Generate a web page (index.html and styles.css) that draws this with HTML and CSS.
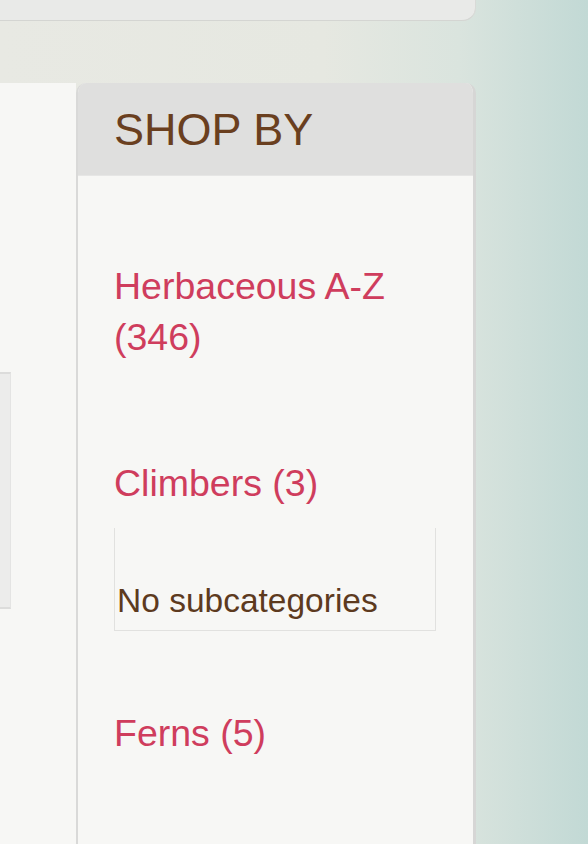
FILE: index.html
```html
<!DOCTYPE html>
<html lang="en">
<head>
    <meta charset="UTF-8">
    <meta name="viewport" content="width=device-width, initial-scale=1.0">
    <title>Shop By</title>
    <link rel="stylesheet" href="styles.css">
</head>
<body>

    <div class="top-bar"></div>

    <div class="page">
        <div class="main-col">
            <div class="main-box"></div>
        </div>

        <aside class="sidebar">
            <h2 class="sidebar-title">SHOP BY</h2>
            <ul class="cat-list">
                <li><a href="#">Herbaceous A-Z (346)</a></li>
                <li class="with-sub">
                    <a href="#">Climbers (3)</a>
                    <div class="subcats">No subcategories</div>
                </li>
                <li><a href="#">Ferns (5)</a></li>
            </ul>
        </aside>
    </div>

</body>
</html>
```

FILE: styles.css
```css
html, body {
    height: 100%;
}
body {
    font-family: "Liberation Sans", Arial, sans-serif;
    margin: 0;
    padding: 0;
    overflow: hidden;
    background: linear-gradient(to right, #e8e9e3 0%, #e6e8e1 55%, #dae4de 78%, #c2d9d5 100%);
}
.top-bar {
    width: 475px;
    height: 20px;
    background-color: #e9eae8;
    border-bottom: 1px solid #d4d5d2;
    border-bottom-right-radius: 13px;
    box-shadow: 1px 0 0 #d8dad7;
}
.page {
    display: flex;
    margin-top: 62px;
    height: 800px;
}
.main-col {
    width: 76px;
    background-color: #f7f7f5;
    padding-top: 289px;
}
.main-box {
    width: 10px;
    height: 233px;
    background-color: #ececeb;
    border-top: 2px solid #dcdcdb;
    border-bottom: 2px solid #dcdcdb;
    border-right: 1px solid #e4e4e3;
}
.sidebar {
    width: 395px;
    background-color: #f7f7f5;
    border-left: 2px solid #d9d9d8;
    border-right: 3px solid #d6d6d5;
    border-radius: 10px 10px 0 0;
    overflow: hidden;
}
.sidebar-title {
    margin: 0;
    height: 45px;
    padding: 24px 0 23px 36px;
    font-size: 45px;
    line-height: 45px;
    font-weight: normal;
    color: #6a3f1f;
    background-color: #dfdfde;
    border-bottom: 1px solid #e6e6e5;
}
.cat-list {
    list-style: none;
    margin: 0;
    padding: 85px 0 0 36px;
}
.cat-list li {
    padding-bottom: 95px;
}
.cat-list li.with-sub {
    padding-bottom: 77px;
}
.cat-list a {
    display: block;
    width: 300px;
    font-size: 37.5px;
    line-height: 51px;
    color: #cf3d5d;
    text-decoration: none;
}
.subcats {
    width: 318px;
    margin-top: 19px;
    padding: 53px 0 9px 2px;
    font-size: 33.5px;
    line-height: 40px;
    color: #5d3a1e;
    border: 1px solid #e1e1df;
    border-top: none;
}
```
